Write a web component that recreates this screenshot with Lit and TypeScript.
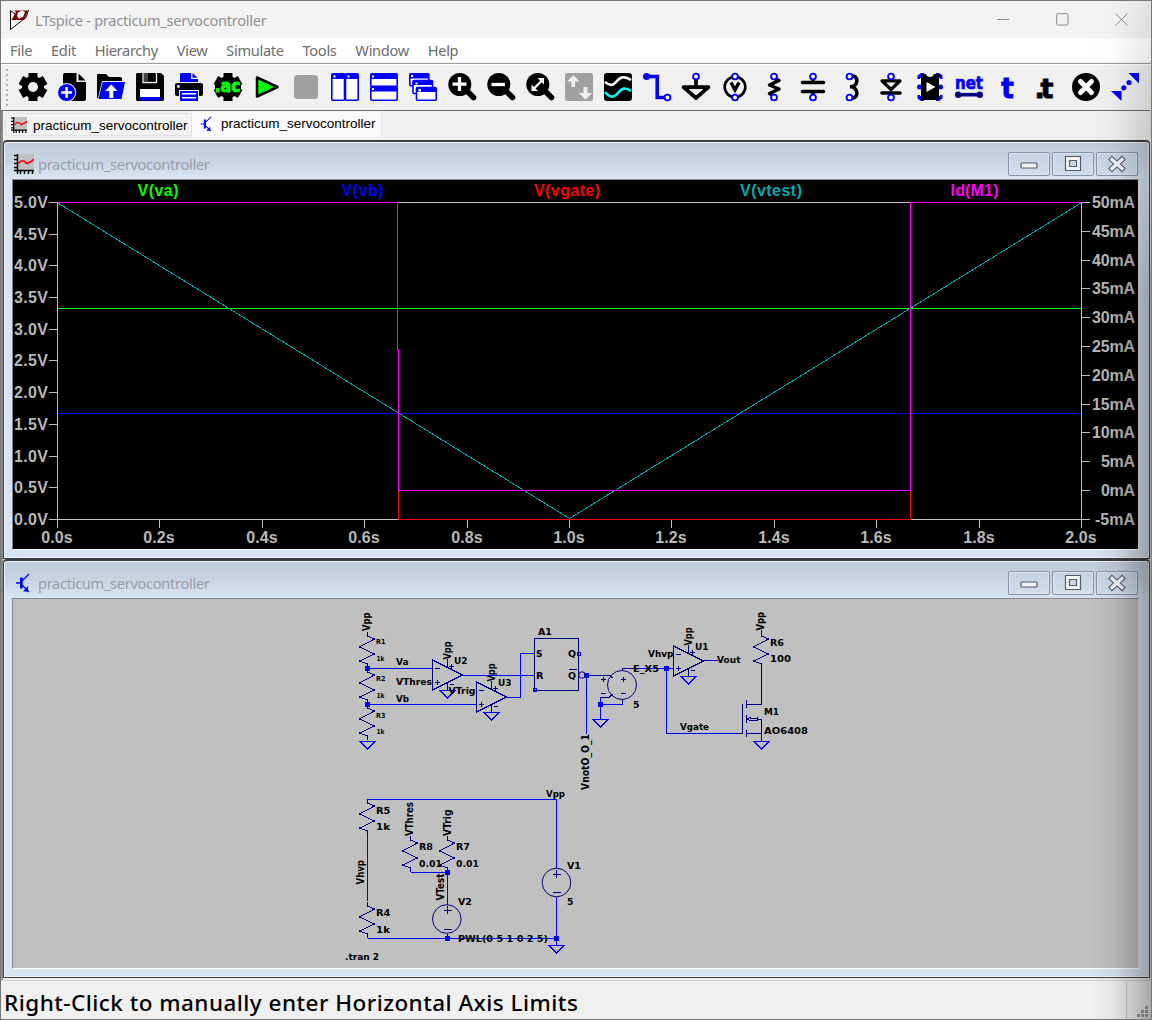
import { LitElement, html, svg, css, SVGTemplateResult } from "lit";
import { customElement, property } from "lit/decorators.js";

const BLUE = "#0000ff";
const BG = "#f0f0f0";

const ring = (x: number, y: number) =>
  svg`<circle cx=${x} cy=${y} r="2.9" fill="#fff" stroke=${BLUE} stroke-width="1.9"/>`;

const gearBody = svg`<g stroke="#000" stroke-width="9" stroke-linecap="butt">
  <path d="M14 0V28"/><path d="M14 0V28" transform="rotate(60 14 14)"/><path d="M14 0V28" transform="rotate(120 14 14)"/></g>
  <circle cx="14" cy="14" r="11"/>`;

const lens = svg`<path d="M19 18L25.500 24.500" stroke="#000" stroke-width="5.600" stroke-linecap="round"/><circle cx="11.800" cy="11.500" r="11.500"/>`;

const icons: SVGTemplateResult[] = [
  svg`${gearBody}<circle cx="14" cy="14" r="5" fill=${BG}/>`,
  svg`<path d="M7 0H18.500V9H28V26Q28 28 26 28H5V2Q5 0 7 0Z"/><path d="M20.500 0.500L27.500 7.500H20.500Z"/>
    <circle cx="8.600" cy="19.500" r="9.600" fill=${BG}/><circle cx="8.600" cy="19.500" r="8.600" fill=${BLUE}/>
    <path d="M8.600 14V25M3.100 19.500H14.100" stroke="#fff" stroke-width="2.400"/>`,
  svg`<path d="M0 25V2Q0 1 1 1H9L12 4H23Q25 4 25 6V8H5L1 25Z"/>
    <path d="M5.500 9H28L24.500 26H1.500Z" fill=${BLUE}/><path d="M14.300 11.500L20.500 18H16.300V25H12.300V18H8.100Z" fill="#fff"/>`,
  svg`<path d="M1 0H25L28 3V27L27 28H1L0 27V1Z"/><path d="M7 0V9.500H20.500V0" fill="#000" stroke=${BG} stroke-width="1.300"/>
    <rect x="8" y="0" width="4" height="8" fill="#444"/><rect x="13.500" y="1" width="5" height="7.500"/>
    <rect x="4" y="16" width="20" height="8" fill="#fff"/><rect x="3.500" y="24" width="21" height="3.500" fill=${BLUE}/>`,
  svg`<path d="M5 9V1Q5 0 6 0H16V6H23V9Z" fill=${BLUE}/><path d="M17.500 0L22.500 4.800H17.500Z" fill=${BLUE}/>
    <path d="M2 10H26Q28 10 28 12V21Q28 23 26 23H2Q0 23 0 21V12Q0 10 2 10Z"/><circle cx="3.400" cy="13.500" r="1.400" fill="#fff"/>
    <rect x="4" y="17" width="20" height="11" fill=${BG}/><rect x="5" y="18" width="18" height="10" fill=${BLUE}/>
    <path d="M7 20.700H21M7 24.700H21" stroke="#fff" stroke-width="1.500"/>`,
  svg`${gearBody}<rect x="1" y="8" width="26" height="12" rx="4"/><text x="0.500" y="19" textLength="26" lengthAdjust="spacingAndGlyphs" font-size="17.500" fill="#00ff00" stroke="#00ff00" stroke-width=".8">.ac</text>`,
  svg`<path d="M4 4.500V23.500L24.500 14Z" fill="#00ff00" stroke="#000" stroke-width="2.500" stroke-linejoin="round"/>`,
  svg`<rect x="2" y="2" width="24" height="24" rx="3.500" fill="#a0a0a0"/>`,
  svg`<g fill="#fff" stroke=${BLUE} stroke-width="1.600"><rect x=".8" y=".8" width="12.700" height="26.400" rx="1"/><rect x="14.500" y=".8" width="12.700" height="26.400" rx="1"/></g>
    <path d="M1 1H13V6H1ZM15 1H27V6H15Z" fill=${BLUE}/><path d="M2.500 2.500H4.500V4.500H2.500ZM16.500 2.500H18.500V4.500H16.500Z" fill="#fff"/>`,
  svg`<g fill="#fff" stroke=${BLUE} stroke-width="1.600"><rect x=".8" y=".8" width="26.400" height="12.400" rx="1"/><rect x=".8" y="13.800" width="26.400" height="13.400" rx="1"/></g>
    <path d="M1 1H27V6H1ZM1 13H27V18.500H1Z" fill=${BLUE}/><path d="M2 2.500H4V4.500H2ZM2 15H4V17H2Z" fill="#fff"/>`,
  svg`<g fill="#fff" stroke=${BLUE} stroke-width="1.600"><rect x=".8" y=".8" width="19" height="12" rx="1"/><rect x="4" y="7.500" width="19.500" height="13" rx="1"/><rect x="7.500" y="14.500" width="19.700" height="12.700" rx="1"/></g>
    <path d="M1 1H20V5.500H1ZM4 7.500H23V12H4ZM8 14.500H27V19H8Z" fill=${BLUE}/><path d="M2 2H4V4H2ZM6.500 9.500H8.500V11.500H6.500ZM9.500 16H12V18.500H9.500Z" fill="#fff"/>`,
  svg`${lens}<path d="M11.500 4V18M4.500 11.200H18.500" stroke="#fff" stroke-width="3.300"/>`,
  svg`${lens}<path d="M4.500 11.500H18" stroke="#fff" stroke-width="3.300"/>`,
  svg`${lens}<path d="M7.500 16L16 7.500" stroke="#fff" stroke-width="2.300"/><path d="M11.500 5H18V11.500ZM5.500 11.500V18H12Z" fill="#fff"/>`,
  svg`<rect width="28" height="28" rx="2.500" fill="#a0a0a0"/><path d="M8.500 2L14.500 8.500H10V14H6.500V8.500H2Z" fill=${BG}/><path d="M20.500 26.500L14 20H18.500V14H22.500V20H27Z" fill=${BG}/>`,
  svg`<rect width="28" height="28" rx="3"/><path d="M1 9C6 13 9 13 13 8S21 3 27 7" stroke="#fff" stroke-width="2.600" fill="none"/>
    <path d="M1 19C6 25 10 25 14 20S21 14 27 18" stroke="#00ffff" stroke-width="2.600" fill="none"/>`,
  svg`<path d="M3.500 3.500H14.200V24.500H22" stroke=${BLUE} stroke-width="3.600" fill="none"/><circle cx="3.500" cy="3.500" r="3.500" fill=${BLUE}/>${ring(24.5, 24.5)}`,
  svg`<path d="M14 6V14M1.500 14.200H26.500L14 25Z" stroke="#000" stroke-width="3.700" fill=${BG} stroke-linejoin="round"/>${ring(14, 3.5)}`,
  svg`<circle cx="14" cy="14" r="10.300" stroke="#000" stroke-width="2.600" fill="none"/><path d="M10 9.500L14 17L18 9.500" stroke="#000" stroke-width="3.400" fill="none"/>${ring(14, 3.5)}${ring(14, 24.5)}`,
  svg`<path d="M14 5L19 7.500L9.500 12L19 16L9.500 20.500L14 23" stroke="#000" stroke-width="3.500" fill="none" stroke-linejoin="round" stroke-linecap="round"/>${ring(14, 3.5)}${ring(14, 24.5)}`,
  svg`<path d="M14 5V9.500M14 18.500V23M3.500 9.500H24.500M3.500 18.500H24.500" stroke="#000" stroke-width="3.600" stroke-linecap="round"/>${ring(14, 3.5)}${ring(14, 24.5)}`,
  svg`<path d="M13 3.500C21 1 21 14 12 13.700C21 13.500 21 27 13 24.500" stroke="#000" stroke-width="3.600" fill="none"/>${ring(11.5, 3.5)}${ring(11.5, 24.5)}`,
  svg`<path d="M5 7.800H23L14 16.500Z" fill=${BG} stroke="#000" stroke-width="3.200" stroke-linejoin="round"/><path d="M5 20H23" stroke="#000" stroke-width="3.600" stroke-linecap="round"/>${ring(14, 3.5)}${ring(14, 24.5)}`,
  svg`<g fill=${BLUE}><path d="M5 0H8V5H4V6H1.500V2.500ZM23 0H20V5H24V6H26.500V2.500ZM5 28H8V23H4V22H1.500V25.500ZM23 28H20V23H24V22H26.500V25.500Z"/><circle cx="3.500" cy="14" r="2.500"/><circle cx="24.500" cy="14" r="2.500"/></g>
    <path d="M6 1H10Q11 4 14 4T18 1H22L23 2V26L22 27H6L5 26V2Z"/><path d="M10.500 9V19L19.500 14Z" fill="#fff"/>`,
  svg`<text x="0" y="15.500" textLength="28" lengthAdjust="spacingAndGlyphs" font-size="18" fill=${BLUE} stroke=${BLUE} stroke-width=".7">net</text>
    <path d="M3 21.700H25" stroke="#000080" stroke-width="3.600"/><circle cx="3.200" cy="21.700" r="3.200" fill="#000080"/><circle cx="24.800" cy="21.700" r="3.200" fill="#000080"/>`,
  svg`<text x="7.200" y="24.800" font-size="27.500" textLength="12.500" lengthAdjust="spacingAndGlyphs" fill=${BLUE} stroke=${BLUE} stroke-width=".9">t</text>`,
  svg`<text x="1.500 7.500" y="24.800" font-size="27" stroke="#000" stroke-width=".9">.t</text>`,
  svg`<circle cx="14" cy="14" r="14"/><path d="M8.500 8.500L19.500 19.500M19.500 8.500L8.500 19.500" stroke="#fff" stroke-width="5" stroke-linecap="round"/>`,
  svg`<g fill=${BLUE}><path d="M17.500 0H28V10.500ZM0 18H10.500V28Z"/><circle cx="18" cy="9.500" r="2.600"/><circle cx="12.800" cy="14.800" r="2.600"/></g>`,
];

const chartIcon = html`<svg viewBox="0 0 20 20"><path d="M4 0H20V16H4Z" fill="#c0c0c0"/>
  <path d="M3.500 0V20M0 16.500H20M0 1.500H3M0 5.500H3M0 9.500H3M0 13.500H3M6.500 17V20M10.500 17V20M14.500 17V20M18.500 17V20" stroke="#000" stroke-width="1.500" fill="none"/>
  <path d="M4.500 9.500L7 7H10L13 9.500L18 7L20 5" stroke="#f00" stroke-width="1.700" fill="none"/></svg>`;
const transistorIcon = html`<svg viewBox="0 0 20 20"><path d="M2 10H8M8 8L11 5L15 1M8 12L15 19" stroke="#00f" stroke-width="1.300" fill="none"/>
  <path d="M6 4.500H8.700V15.500H6ZM14 13V18.500H9Z" fill="#00f"/></svg>`;

/* ---------- waveform plot ---------- */
const X0 = 57.5, X1 = 1081.5, Y0 = 202.5, Y1 = 519.5;

function plot() {
  const px = (t: number) => Math.floor(X0 + (t / 2) * (X1 - X0)) + 0.5;
  const label = (x: number, y: number, s: string, w: number, anchor = "start", fill = "#b8b8b8") =>
    svg`<text x=${x} y=${y} text-anchor=${anchor} fill=${fill} textLength=${w}>${s}</text>`;
  const left = [...Array(11)].map((_, i) => {
    const y = Math.round(203 + i * 31.69) - 0.5;
    return svg`<path d="M49 ${y}H57" stroke="#c0c0c0"/>${label(14, y + 6, (5 - i * 0.5).toFixed(1) + "V", 34)}`;
  });
  const right = [...Array(12)].map((_, i) => {
    const y = Math.round(203 + i * 28.81) - 0.5;
    const s = 50 - i * 5 + "mA";
    return svg`<path d="M1082 ${y}H1090" stroke="#c0c0c0"/>${label(1135, y + 6, s, s.length === 4 ? (i === 11 ? 40 : 43) : 34, "end")}`;
  });
  const bottom = [...Array(11)].map((_, i) => {
    const x = px(i * 0.2);
    return svg`<path d="M${x} 520V528" stroke="#c0c0c0"/>${label(x - 0.5, 543, (i * 0.2).toFixed(1) + "s", 31.5, "middle")}`;
  });
  const names: [string, number, number, string][] = [
    ["V(va)", 158, 41, "#00ff00"], ["V(vb)", 362.5, 42, "#0000ff"], ["V(vgate)", 567, 66, "#ff0000"],
    ["V(vtest)", 771, 62, "#00aaaa"], ["Id(M1)", 974.5, 48, "#ff00ff"],
  ];
  return html`<svg class="fill" viewBox="13 181 1125 368" font-family="Liberation Sans, sans-serif" font-weight="700" font-size="16">
    <g shape-rendering="crispEdges" fill="none">
      <path d="M${X0} ${Y0}H${X1}V${Y1}H${X0}Z" stroke="#c0c0c0"/>
      <path d="M58 413.500H1081" stroke="#0000ff"/>
      <path d="M58 308.500H1081" stroke="#00ff00"/>
      <path d="M58 203.500L569.500 519L1081 203.500" stroke="#00aaaa"/>
      <path d="M398.500 490V519.500H910.500V490" stroke="#ff0000"/>
      <path d="M58 202.500H397.500V349.500H398.500V490.500H910.500V202.500H1081" stroke="#ff00ff"/>
    </g>
    <g shape-rendering="crispEdges">${left}${right}${bottom}</g>
    ${names.map(([s, x, w, c]) => label(x, 196, s, w, "middle", c))}
  </svg>`;
}

/* ---------- schematic ---------- */
const res = (x: number, y: number) => svg`<path d="M${x} ${y}v4l7 3l-15 8l15 7l-15 7l8 3v4"/>`;
const gnd = (x: number, y: number) => svg`<path stroke="#00f" d="M${x - 8} ${y}h16l-8 8z"/>`;
const node = (x: number, y: number) => svg`<rect x=${x - 2.5} y=${y - 2.5} width="5" height="5" fill="#00f" stroke="none"/>`;
const amp = (x: number, y: number) => svg`<g transform="translate(${x} ${y})">
  <path d="M0 0V30L30 15ZM2 8h5M2 22h5M4.500 20v5M15 -1v9M16 6h5M18.500 4v5M15 23v7M17 24h4"/>${gnd(15, 30)}</g>`;

type Label = [string, number, number, number, number?, boolean?];
const labels: Label[] = [
  ["R1", 376, 644.7, 9.3, 7], ["1k", 376.5, 661, 8, 7], ["R2", 376, 681.7, 9.3, 7], ["1k", 376.5, 698, 8, 7],
  ["R3", 376, 718, 9.3, 7], ["1k", 376.5, 734, 8, 7],
  ["Va", 396, 665.7, 12.5], ["VThres", 396, 685.7, 36], ["Vb", 396, 702, 13], ["U2", 454, 664, 13.5], ["U3", 498, 686, 13.5],
  ["VTrig", 448.5, 694, 27], ["A1", 538, 635, 14], ["S", 536, 657, 6.5], ["R", 536, 679, 7.5], ["Q", 568, 657, 8], ["Q", 568, 679, 8],
  ["Vhvp", 648, 657, 25.5], ["U1", 695, 650, 13.5], ["Vout", 717, 663.5, 23.5], ["E_X5", 633, 672, 26], ["5", 633, 708, 6.5],
  ["R6", 770, 646, 14], ["100", 770, 662, 21], ["M1", 764, 715, 15], ["AO6408", 764, 734, 44], ["Vgate", 680, 730.5, 29],
  ["Vpp", 546, 797, 19], ["R5", 376, 814, 14.5], ["1k", 376, 830, 14], ["R4", 376, 916, 14.5], ["1k", 376, 933, 14],
  ["R8", 419, 850, 14], ["0.01", 419, 867, 23], ["R7", 456, 850, 14], ["0.01", 456, 867, 23],
  ["V2", 458, 905, 14], ["V1", 567, 869, 14], ["5", 567, 905, 6.5], ["PWL(0 5 1 0 2 5)", 458, 942, 90], [".tran 2", 345, 960, 34],
  ["Vpp", 370, 631.5, 18.5, 9.6, true], ["Vpp", 450.5, 660, 18, 9.6, true], ["Vpp", 494.5, 682, 18, 9.6, true],
  ["Vpp", 691.5, 646, 18, 9.6, true], ["Vpp", 764, 631, 18.5, 9.6, true], ["VnotO_O_1", 589, 790.5, 56, 9.6, true],
  ["VThres", 413, 836.5, 34, 9.6, true], ["VTrig", 450.5, 836.5, 26.5, 9.6, true], ["VTest", 444, 901, 27, 9.6, true],
  ["Vhvp", 364, 885, 24.5, 9.6, true],
];

function schematic() {
  return html`<svg class="fill sch" viewBox="13 600 1125 368">
    <g transform="translate(.5 .5)" shape-rendering="crispEdges" fill="none" stroke="#000080">
      <g stroke="#00f">
        <path d="M367 668H432M367 704H476M462 675H534M506 697H520V653H534M586 734V675H593M600 719V704H622M600 704V697M637 668H673M666 668V733H736M717 660H706M761 704V668"/>
        <path d="M367 799H556V868M556 897V945M367 832V901M367 938H556M410 872H447V905M447 934V938"/>
        <rect x="577" y="652" width="3" height="3"/><rect x="533" y="688" width="3" height="3"/>
      </g>
      ${res(367, 632)}${res(367, 668)}${res(367, 704)}${gnd(367, 741)}
      ${amp(432, 660)}${amp(476, 682)}${amp(673, 646)}
      <path d="M534 638H578V690H534ZM568 669H576M593 675H609L612 678M600 697H609L612 694M622 671V668H637M622 700V704M703 660H708"/>
      <path d="M600 679h5M602.500 677v5M620 679h5M622.500 677v5M600 693h5M620 693h5"/>
      ${res(761, 632)}<path d="M761 630V632M736 733H742M742 704V733M746 700V708M746 715V723M746 730V737M746 704H761V668M746 733H761M761 741V719H757M747 719L750 717M747 719L750 721M749 718H756M749 720H756M757 717V721"/>
      ${gnd(600, 719)}${gnd(761, 741)}
      ${res(367, 799)}${res(367, 902)}${res(410, 836)}${res(447, 836)}
      <path d="M443 910h8M447 906v8M443 929h8M552 874h8M556 870v8M552 892h8"/>${gnd(556, 945)}
      ${node(367, 668)}${node(367, 704)}${node(586, 675)}${node(600, 704)}${node(666, 668)}${node(447, 872)}${node(447, 938)}${node(556, 938)}
    </g>
    <g fill="none" stroke="#000080"><circle cx="622" cy="685.500" r="14.500"/><circle cx="446.800" cy="919.500" r="14.300"/><circle cx="556.500" cy="883" r="14.300"/><circle cx="582" cy="675.500" r="3.200"/></g>
    <g font-family="DejaVu Sans, sans-serif" font-weight="700" fill="#000">
      ${labels.map(([s, x, y, w, size = 9.2, rot]) =>
        svg`<text transform="translate(${x} ${y}) rotate(${rot ? -90 : 0})" font-size=${size} textLength=${w} lengthAdjust="spacingAndGlyphs">${s}</text>`)}
    </g>
  </svg>`;
}

@customElement("mdi-window")
export class MdiWindow extends LitElement {
  @property() caption = "";
  @property() kind = "plot";
  static styles = css`
    :host { display: flex; flex-direction: column; box-sizing: border-box; border: 1px solid #3f3f3f; border-top-width: 2px;
      border-radius: 4px 4px 0 0; padding: 0 10px 8px 8px; overflow: hidden;
      background: linear-gradient(#bfccd9 0, #c6d4e2 18px, #d7e4f2 36px); box-shadow: inset 1px 1px 0 #eef4fa, inset -1px -1px 0 #eef4fa; }
    .title { height: 37px; flex: none; display: flex; align-items: center; font: 14.6px "Noto Sans", sans-serif; color: #999ea3; }
    .title > svg { width: 20px; height: 20px; margin: 6px 4px 0 2px; flex: none; }
    .name { flex: 1; padding-top: 6px; letter-spacing: -0.3px; white-space: nowrap; }
    .btns { display: flex; gap: 2px; padding-top: 6px; margin-right: 1px; }
    .btn { width: 42px; height: 24px; box-sizing: border-box; border: 1px solid #8592ae; border-radius: 2px;
      background: linear-gradient(#c6d3e2, #d0deec); box-shadow: inset 0 0 0 1px #dbe6f2; display: grid; place-items: center; }
    .btn svg { width: 20px; height: 18px; }
    .client { flex: 1; min-height: 0; border: 1px solid #8a8a8a; border-right-color: #e4e4e4; border-bottom-color: #fff; background: #000; display: flex; }
    .client.sheet { background: #c0c0c0; }
    .fill { width: 1125px; height: 100%; display: block; flex: none; }
  `;
  render() {
    const st = "#535a73";
    return html`
      <div class="title">${this.kind === "plot" ? chartIcon : transistorIcon}<span class="name">${this.caption}</span>
        <div class="btns">
          <div class="btn"><svg viewBox="0 0 20 18"><rect x="2" y="8" width="16" height="5" rx="1" fill="#f4f4f4" stroke=${st} stroke-width="1.200"/></svg></div>
          <div class="btn"><svg viewBox="0 0 20 18"><path fill-rule="evenodd" d="M2.500 1.500H17.500V15.500H2.500ZM6.500 5.500V11.500H13.500V5.500Z" fill="#f4f4f4" stroke=${st} stroke-width="1.200"/></svg></div>
          <div class="btn"><svg viewBox="0 0 20 18"><g fill="none" stroke-linecap="square"><path d="M5 4.500L15 13.500M15 4.500L5 13.500" stroke=${st} stroke-width="5.600"/><path d="M5 4.500L15 13.500M15 4.500L5 13.500" stroke="#f4f4f4" stroke-width="3.400"/></g></svg></div>
        </div></div>
      <div class="client ${this.kind === "plot" ? "" : "sheet"}">${this.kind === "plot" ? plot() : schematic()}</div>`;
  }
}

@customElement("app-root")
export class AppRoot extends LitElement {
  static styles = css`
    :host { display: block; width: 1152px; height: 1020px; overflow: hidden; }
    .app { position: relative; box-sizing: border-box; width: 1152px; height: 1020px; display: flex; flex-direction: column;
      border: 1px solid #777; background: #f0f0f0; }
    .titlebar { height: 37px; flex: none; background: #f3f3f3; display: flex; align-items: center; color: #929292; font: 14.6px "Noto Sans", sans-serif; }
    .titlebar .logo { width: 22px; height: 22px; margin: 0 5px 0 7px; }
    .titlebar .name { flex: 1; letter-spacing: -0.27px; }
    .caps { display: flex; gap: 46px; margin-right: 23px; }
    .caps svg { width: 13px; height: 13px; display: block; }
    .menu { height: 24px; flex: none; background: #fff; border-bottom: 1px solid #f0f0f0; display: flex; align-items: center; gap: 18.8px; padding-left: 9px;
      font: 14.6px "Noto Sans", sans-serif; letter-spacing: -0.3px; color: #6d6d6d; }
    .toolbar { height: 46px; flex: none; border-top: 1px solid #a0a0a0; box-shadow: inset 0 1px 0 #fff; display: flex; align-items: center; gap: 11px; padding-left: 5px; }
    .grip { width: 2px; height: 37px; flex: none; background: repeating-linear-gradient(#b4b4b4 0 2px, transparent 2px 5px); }
    .toolbar svg { width: 28px; height: 28px; flex: none; display: block; overflow: visible; font-family: "DejaVu Sans", sans-serif; font-weight: 700; }
    .work { flex: 1; min-height: 0; border-top: 1px solid #6b6b6b; border-left: 2px solid #8a8a8a; margin-right: 1px; display: flex; flex-direction: column; }
    .tabs { height: 29px; flex: none; display: flex; align-items: flex-start; font: 13.5px "Liberation Sans", sans-serif; color: #000; }
    .tab { box-sizing: border-box; display: flex; align-items: center; white-space: nowrap; height: 23px; width: 187px; margin-top: 2px; margin-left: 2px; padding: 1px 0 0 5px; border: 1px solid #e2e2e2; background: #f2f2f2; }
    .tab.on { height: 26px; width: 190px; margin: 0; padding: 0 0 1px 6px; background: #f9f9f9; border-color: #f9f9f9 #e2e2e2 #f9f9f9 #f9f9f9; }
    .tab svg { width: 16px; height: 16px; flex: none; margin-right: 6px; }
    mdi-window { width: 1147px; height: 419px; flex: none; }
    .status { height: 39px; flex: none; border-top: 1px solid #cfcfcf; box-sizing: border-box; display: flex; align-items: center; color: #000;
      font: 500 22.5px "Noto Sans", sans-serif; letter-spacing: 0.46px; padding-left: 3px; }
    .status .msg { flex: 1; white-space: nowrap; padding-top: 5px; }
    .status svg { width: 24px; height: 37px; border-left: 1px solid #c4c4c4; }
    .shade { position: absolute; top: 0; right: 0; width: 60px; height: 1018px; pointer-events: none;
      background: linear-gradient(90deg, rgba(0,0,0,0), rgba(0,0,0,.05) 40%, rgba(0,0,0,.3)); -webkit-mask-image: linear-gradient(rgba(0,0,0,.2), rgba(0,0,0,.4) 80px, #000 300px); }
  `;
  render() {
    return html`<div class="app">
      <div class="titlebar">
        <svg class="logo" viewBox="0 0 22 22"><path d="M2.500 1.500L7 5M2.500 1.500V20.500L18 8.500L20.500 1" fill="none" stroke="#000"/><path d="M6 1.500H20L16 11H3.500L8 3Z" fill="#7d0000"/><path d="M10 3.500L14 1.500L17 3L15 8L11 9.500L9 7Z" fill="#fff"/></svg>
        <span class="name">LTspice - practicum_servocontroller</span>
        <div class="caps">
          <svg viewBox="0 0 13 13"><path d="M0 6.500H12" stroke="#8c8c8c"/></svg>
          <svg viewBox="0 0 13 13"><rect x=".7" y=".7" width="11.300" height="11.300" rx="1" fill="none" stroke="#8c8c8c"/></svg>
          <svg viewBox="0 0 13 13"><path d="M.5.5L12.500 12.500M12.500.5L.5 12.500" stroke="#8c8c8c"/></svg>
        </div>
      </div>
      <div class="menu">${["File", "Edit", "Hierarchy", "View", "Simulate", "Tools", "Window", "Help"].map((m) => html`<span>${m}</span>`)}</div>
      <div class="toolbar"><div class="grip"></div>${icons.map((i) => html`<svg viewBox="0 0 28 28">${i}</svg>`)}</div>
      <div class="work">
        <div class="tabs">
          <div class="tab">${chartIcon}<span>practicum_servocontroller</span></div>
          <div class="tab on">${transistorIcon}<span>practicum_servocontroller</span></div>
        </div>
        <mdi-window kind="plot" caption="practicum_servocontroller"></mdi-window>
        <mdi-window kind="sheet" caption="practicum_servocontroller"></mdi-window>
      </div>
      <div class="status"><span class="msg">Right-Click to manually enter Horizontal Axis Limits</span>
        <svg viewBox="0 0 24 37"><path d="M18 24h3v3h-3zM14 28h3v3h-3zM18 28h3v3h-3zM10 32h3v3h-3zM14 32h3v3h-3zM18 32h3v3h-3z" fill="#a0a0a0"/></svg></div>
      <div class="shade"></div>
    </div>`;
  }
}
